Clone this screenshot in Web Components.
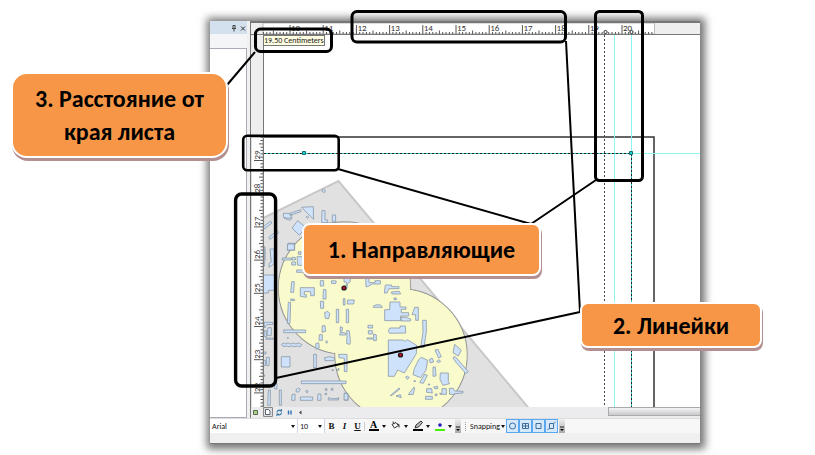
<!DOCTYPE html>
<html lang="ru">
<head>
<meta charset="utf-8">
<title>Линейки и направляющие</title>
<style>
  body { margin: 0; background: #fff; font-family: "Open Sans", "Liberation Sans", sans-serif;
    --ui: 8px/10px "Liberation Sans Narrow", Carlito, sans-serif; }
</style>
</head>
<body>
<guide-stage>
  <app-window></app-window>
  <annotation-lines slot="overlay"></annotation-lines>
  <call-out slot="overlay" style="--x:11px;--y:72px;--w:217px;--h:86px;--r:16px">3. Расстояние от края листа</call-out>
  <call-out slot="overlay" style="--x:302px;--y:223px;--w:239px;--h:53px;--r:8px">1. Направляющие</call-out>
  <call-out slot="overlay" style="--x:580px;--y:302px;--w:182px;--h:46px;--r:8px">2. Линейки</call-out>
</guide-stage>

<script>
const define = (name, html, setup) => customElements.define(name, class extends HTMLElement {
  connectedCallback() {
    if (this.shadowRoot) return;
    const root = this.attachShadow({ mode: 'open' });
    const t = document.createElement('template');
    t.innerHTML = html;
    root.append(t.content.cloneNode(true));
    if (setup) setup(this, root);
  }
});

define('guide-stage', `
<style>
  :host { display: grid; position: relative; height: 100vh; box-sizing: border-box; padding: 21px 115px 11px 210px; overflow: hidden; }
</style>
<slot></slot><slot name="overlay"></slot>`);

/* Orange label over the window */
define('call-out', `
<style>
  :host { position: absolute; left: var(--x); top: var(--y); width: var(--w); min-height: var(--h); box-sizing: border-box;
    display: grid; place-items: center; text-align: center; padding: 0 16px; background: #f79646;
    border: 2px solid #fff; border-radius: var(--r); box-shadow: 1px 3px 0 #b38f91;
    font: 700 24px/33px Carlito, Lato, "Open Sans", sans-serif; color: #000; }
</style>
<span><slot></slot></span>`);

/* Black frames and connectors */
define('annotation-lines', `
<style>
  :host { position: absolute; inset: 0; pointer-events: none; }
  svg { display: block; width: 100%; height: 100%; }
</style>
<svg fill="none" stroke="#000" stroke-width="3" stroke-linejoin="round" aria-hidden="true">
  <rect x="352" y="11.500" width="213.500" height="30.500" rx="5"/>
  <rect x="595.500" y="11.500" width="47" height="169" rx="4"/>
  <rect x="255.500" y="29" width="76" height="22.500" rx="5"/>
  <rect x="243.200" y="135.800" width="95.500" height="34.500" rx="4" stroke-width="2.600"/>
  <rect x="235.600" y="194" width="40" height="192" rx="6" stroke-width="3.400"/>
  <g stroke-width="2">
    <path d="M255 52L227 85"/>
    <path d="M566 41L580 312L276 378"/>
    <path d="M338 169L531 224L596 180"/>
  </g>
</svg>`);

define('app-window', `
<style>
  :host { display: grid; grid-template-rows: minmax(0,1fr) auto; min-width: 0; background: #f0f0f0;
    box-shadow: 1px 1px 8px 4px rgba(0,0,0,.55); }
  .work { display: grid; grid-template-columns: 37px minmax(0,1fr); column-gap: 3px; min-height: 0; }
  .doc { display: grid; grid-template: 14px minmax(0,1fr) 11px / 13px minmax(0,1fr); border-left: 1px solid #777; }
  h-ruler, view-bar { grid-column: 1 / 3; }
</style>
<div class="work">
  <side-panel></side-panel>
  <div class="doc">
    <h-ruler></h-ruler>
    <v-ruler></v-ruler>
    <map-canvas></map-canvas>
    <view-bar></view-bar>
  </div>
</div>
<format-bar></format-bar>`);

define('side-panel', `
<style>
  :host { display: grid; grid-template-rows: 13px 14px 1fr; background: #f4f5f7; }
  header { background: #d3e0ee; display: flex; justify-content: flex-end; align-items: center; }
  button { all: unset; display: block; width: 9px; height: 10px; }
  svg { display: block; width: 100%; height: 100%; }
  .body { background: #fff; border: 1px solid #a9abb5; border-left: 0; }
</style>
<header>
  <button aria-label="Закрепить"><svg viewBox="0 0 9 10" fill="none" stroke="#444"><path d="M3 5.500h4M4 2.500v3M6 2v3.500M4 2.500h2M5 5.500v3"/></svg></button>
  <button aria-label="Закрыть"><svg viewBox="0 0 9 10" fill="none" stroke="#333"><path d="M3 3.500l4 4M7 3.500l-4 4"/></svg></button>
</header>
<div></div>
<div class="body"></div>`);

/* Ruler scale: 1 cm = 33.2 px */
const CM = 33.2;
define('h-ruler', `
<style>
  :host { display: block; box-sizing: border-box; border-top: 2px solid #777; border-bottom: 1px solid #777; background: #eee; overflow: hidden; }
  svg { display: block; width: 100%; height: 11px; }
  text { font: 9px "Liberation Sans Narrow", Carlito, sans-serif; fill: #333; }
</style>
<svg><rect x="12" width="391.500" height="11" fill="#fff" stroke="#bbb"/><g></g>
<g fill="#fff" stroke="#333"><circle cx="354.500" cy="9" r="1.600"/><circle cx="380.500" cy="9" r="1.600"/></g></svg>`, (el, root) => {
  let s = '', ticks = '';
  for (let mm = 92; mm <= 210; mm++) {
    const x = (39 + (mm - 100) * CM / 10).toFixed(1);
    if (mm % 10 === 0) {
      if (mm < 210) { ticks += `M${x} 2V11`; s += `<text x="${+x + 1}" y="7.5">${mm / 10}</text>`; }
    } else ticks += `M${x} ${mm % 5 === 0 ? 7.5 : 9}V11`;
  }
  root.querySelector('g').innerHTML = `<path d="${ticks}" stroke="#555"/>` + s;
});

define('v-ruler', `
<style>
  :host { display: block; border-right: 1px solid #777; background: #eee; overflow: hidden; min-height: 0; }
  svg { display: block; width: 100%; height: 100%; }
  text { font: 9px "Liberation Sans Narrow", Carlito, sans-serif; fill: #333; }
</style>
<svg><rect y="102.500" width="12" height="1000" fill="#fff" stroke="#bbb"/><g></g></svg>`, (el, root) => {
  let s = '', ticks = '';
  for (let mm = 297; mm >= 216; mm--) {
    const y = (125.5 + (290 - mm) * CM / 10).toFixed(1);
    if (mm % 10 === 0) {
      ticks += `M3 ${y}H12`;
      s += `<text transform="translate(8.500 ${+y - 1}) rotate(-90)">${mm / 10}</text>`;
    } else ticks += `M${mm % 5 === 0 ? 8 : 9.5} ${y}H12`;
  }
  root.querySelector('g').innerHTML = `<path d="${ticks}" stroke="#555"/>` + s;
});

define('map-canvas', `
<style>
  :host { display: block; position: relative; background: #fff; overflow: hidden; min-height: 0; }
  svg { display: block; width: 100%; height: 100%; }
  .tip { position: absolute; left: 0; top: 0; box-sizing: border-box; height: 11px; background: #ffffe1;
    border: 1px solid #777; border-left: 0; font: var(--ui); line-height: 9px; color: #222; white-space: nowrap; }
</style>
<svg><g transform="translate(-264 -35)">
  <path d="M255 222L338.500 181L532 412H255z" fill="#e1e1e1" stroke="#c8c8c8" stroke-width="2"/>
  <g fill="#fafbcd" stroke="#999" stroke-width="1.400"><circle cx="344.500" cy="288" r="66"/><circle cx="401" cy="355" r="66"/></g>
  <g fill="#fafbcd"><circle cx="344.500" cy="288" r="65.700"/><circle cx="401" cy="355" r="65.700"/></g>
  <g fill="#cfe2fb" stroke="#8898a6" stroke-width="2.400">
    <g transform="translate(200 100) scale(.3333)">
      <path d="M305 322L340 320L341 358L322 340z M366 270l5-3 5 4-2 6-7-1z M250 340h18l8 5-5 10-20-2z M252 355l20 6 5-10M270 340l32-11 1 6-33 11z M318 351l4-3 4 4-3 4z"/>
      <path d="M190 380l22-17 4 6-23 18z M206 412l26-20 4 6-26 20z M276 384l17-22 24 20-19 24z"/>
      <path d="M366 332h9v28h8v8h-18z M397 345h10v19h-10z M378 369h75M264 430h20v21h-22z"/>
      <path d="M188 442h7v38h-7z M212 450h12v30h-10z"/>
    </g>
    <g transform="translate(200 240) scale(.3333)">
      <path d="M188 20h6v58h-6z M210 27h12v45l-15 10v-12l7-4z M188 105h35v46h-18v8h-17z"/>
      <path d="M263 12h20v18h-21z M247 54h27v6h-27z M276 52h10v8h-10z M275 66h12v9h-12z M291 50h30v26h-28z M295 35h8v8h-8z M290 90h26v7h-26z"/>
      <path d="M275 125h8l-2 32h-9z M272 177l12 1-1 4-11-1z M301 143h42v24h-11v-12h-19v9h6v8l-18-3z"/>
      <path d="M265 187h7l-2 63h-8z M361 122h10v16h-10z M395 122l14 1-2 8-13-1z M370 149h8v28h-9z M361 184h10v21h-9z M374 218l9-4 6 6-3 16-10-1z"/>
      <path d="M409 208h7v40h-7z M439 208h7v40h-7z M443 180h20l-2 12h-19z M430 176h5v19h-5z M432 112l20-3-2 17-7 5-3 16-8 1v-10h7v-12h-7z"/>
      <path d="M367 257h8l2 17-11 3z M358 284h9v17h-10z M347 311l9-3 2 15-10 5z M421 260l7 3-3 15 12 1v6h-18l2-6z M440 271l8 2 3 26-1 14-10-2 1-22z M377 306l3-4 3 4-3 4z"/>
      <path d="M192 247h27v6l-19 1-6 10zM204 263h10v23h-13z M193 272h6v20l-7-4z M198 294h22v4h-22z M251 270h66v8h-66z M262 293h3v2h-3z"/>
      <path d="M244 314l5-5 7 3 8-3 7 3 9-3 7 3 9-3 10 5-5 6-8-2-8 2-8-2-9 2-8-2-8 2z"/>
      <path d="M189 336h9v6h-9z M188 361h8v16h-8z M199 352h9l-1 25h-7z M190 405h4v4h-4z M244 350h26v31h-26z M341 343h8v40h-8z M374 353l15-3 15 4-2 8h-27z M416 343h25v52h-8v-40l-16-2z"/>
      <path d="M396 389h4v3h-4z M412 388l5-3v6h-6z M304 423h134v8h-134z M224 430h7v17h-7z M205 450h6v46h-8z M238 450h6v46h-6z M276 464l9-2v19h-10z M288 449l7-5 6 4-5 8h-7z M317 453l4-2 4 3-4 5z M301 471h37v10h-37z M354 462h9v19h-10z M376 446h5v5h-5z M394 445h5v6h-5z M385 473l10 3h20v-4l1 8h-31z M375 460h5v4h-5z M433 460h11v21h-11z"/>
    </g>
    <g transform="translate(340 260) scale(.3333)">
      <path d="M77 40h10v28h18v-6h16v10h-24l-14 8h-5z M136 75h19v5h22v6h-30l-6 13h-8z M154 96l24-2 4 8h-26z M100 138l10-4 12 1 5 7h-27z M162 114h7v5h-7z"/>
      <path d="M150 126h30v15h18v7h-14v10h22v10h-24v14h-48v-33h15z M224 142h11v39h-8v-17h-11l4-10z M183 172h16l14 6-2 5h-28z"/>
      <path d="M84 196h14v8h-14z M85 212h12v10h-12z M81 234h20v-12l8 3v17h-8v-5h-20z M145 212l5-8h30v-6h16l1 21-48 1z M248 181h11v35l-7 47-10-1 7-45z"/>
      <path d="M145 240h44l5 4 8-5 28 17-1 25-36 58-20-9-10 19h-18z"/>
      <path d="M236 299l8-7 19 9-5 30-16 22-23-9 4-18z M268 298l9-3 4 11-10 3z M285 270l9-2 10 22-8 4z M290 304l7-5 5 5-8 4z M279 321h7l2 27-9 1z M344 253l20 18-9 17-16-10z M339 293l7-3 39 45-7 6-31-35z"/>
      <path d="M301 339h24v26l4 6-20 5-9-18z M197 351l6-3 5 5-6 5z M222 362h4v3h-4z M239 368l15-25 8 3-12 24z M151 407l26-23 3 3-26 20z M168 408l13-4 3 9z M205 404l17-23 2 4-4 18z M265 372h4v3h-4z"/>
      <path d="M260 386h15l2 13-17-2z M257 409h20v9h-21z M281 381l12-2v7h-9z M286 402h5v5h-5z M299 400h7v-14h13v17h-19z M328 385h12l4 8 25 1v5l-25 2-3 2h-12z M13 399l11 4-1 17-11-1z"/>
    </g>
  </g>
  <g fill="#c4122f" stroke="#111" stroke-width="1.200"><circle cx="344" cy="288" r="2"/><circle cx="400.500" cy="355" r="2"/></g>
  <g fill="none">
    <path d="M262 137H654V412" stroke="#333" stroke-width="1.500"/>
    <path d="M614.500 35V412M631.500 35V153M631 153.500H1200" stroke="#8df3f3"/>
    <path d="M262 153.500H631.500V412" stroke="#222"/>
    <path d="M262 153.500H631.500V412" stroke="#35c0c0" stroke-dasharray="2 2"/>
    <path d="M604.500 35V412" stroke="#444" stroke-dasharray="2 2"/>
    <path d="M302.500 151.500h3v3h-3zM629.500 151.500h3v3h-3z" fill="#1fd3cf" stroke="#126e70"/>
  </g>
</g></svg>
<div class="tip">19.50 Centimeters</div>`);

define('view-bar', `
<style>
  :host { display: flex; justify-content: space-between; background: #ececee; }
  nav { display: flex; align-items: center; }
  button { all: unset; display: block; width: 12px; height: 11px; }
  svg { display: block; width: 100%; height: 100%; }
  .thumb { width: 92px; height: 9px; box-sizing: border-box; border: 1px solid #aaa; border-right: 0; background: linear-gradient(#f4f4f4,#c9c9cd); }
</style>
<nav>
  <button aria-label="Вид данных"><svg viewBox="0 0 12 11"><path d="M2.500 3.500h4v4h-4z" fill="#acd28a" stroke="#576a4d"/></svg></button>
  <button aria-label="Вид компоновки"><svg viewBox="0 0 12 11"><path d="M.5.5h9v9h-9z" fill="#ddd" stroke="#888"/><path d="M2.500 2.500h3l1.500 1.500v3.500h-4.500z" fill="#fff" stroke="#567"/></svg></button>
  <button aria-label="Обновить"><svg viewBox="0 0 12 11" fill="none" stroke="#3c7fa8" stroke-width="1.200"><path d="M2 5.500a2.300 2.300 0 0 1 4-1.500M6.500 5.500a2.300 2.300 0 0 1-4 1.500M6.500 2v2h-2M2 9V7h2"/></svg></button>
  <button aria-label="Пауза"><svg viewBox="0 0 12 11" stroke="#2b6fb5" stroke-width="1.400"><path d="M1.500 3.500v4M4 3.500v4"/></svg></button>
  <button aria-label="Прокрутить влево"><svg viewBox="0 0 12 11"><path d="M0 5.500l2.500-2v4z" fill="#444"/></svg></button>
</nav>
<div class="thumb"></div>`);

/* Colour button with a drop arrow; the icon comes through the slot */
define('tool-button', `
<style>
  :host { display: block; flex: none; }
  button { all: unset; display: flex; align-items: center; width: 22px; height: 14px; }
  span { width: 16px; height: 14px; }
  i { border: 2px solid transparent; border-top: 3px solid #111; border-bottom: 0; }
</style>
<button><span><slot></slot></span><i></i></button>`, (el, root) =>
  root.querySelector('button').setAttribute('aria-label', el.getAttribute('label')));

define('format-bar', `
<style>
  :host { display: block; background: #f0f0f0; border-top: 1px solid #ddd; border-bottom: 1px solid #777; box-sizing: border-box; height: 26px; }
  .row { display: flex; align-items: center; height: 14px; background: #f7f7f8; overflow: hidden; }
  select { appearance: none; box-sizing: border-box; height: 14px; margin: 0; border: 0; border-right: 1px solid #ccd6e4; border-radius: 0; flex: none;
    padding: 0 8px 0 2px; font: var(--ui); color: #111; background: #fff; }
  .pick { position: relative; flex: none; display: flex; }
  .pick::after { content: ""; position: absolute; right: 3px; top: 6px; border: 2px solid transparent; border-top: 3px solid #111; border-bottom: 0; }
  .font { width: 88px; } .size { width: 27px; }
  button { all: unset; flex: none; width: 13px; height: 14px; text-align: center; font: 700 9px/14px "Liberation Serif", serif; color: #111; }
  .i { font-style: italic; } .u { text-decoration: underline; }
  .sep { width: 1px; height: 9px; background: #ccc; margin-right: 1px; }
  svg { display: block; }
  .grip { width: 6px; height: 14px; margin: 0 1px; background: linear-gradient(#eee,#aaa); }
  .dots { height: 9px; border-left: 1px dotted #999; margin: 0 4px 0 3px; }
  .snap { display: flex; align-items: center; gap: 1px; width: 36px; font: var(--ui); }
  .snap i { border: 2px solid transparent; border-top: 3px solid #111; border-bottom: 0; }
  .t { box-sizing: border-box; border: 1px solid #5aa9ee; background: #d5e9fb; }
</style>
<div class="row">
  <label class="pick"><select class="font" aria-label="Шрифт"><option>Arial</option></select></label>
  <label class="pick"><select class="size" aria-label="Размер"><option>10</option></select></label>
  <button>B</button><button class="i">I</button><button class="u">U</button><div class="sep"></div>
  <tool-button label="Цвет текста"><svg width="16" height="14"><text x="4" y="9" font-family="Liberation Serif" font-weight="700" font-size="10">A</text><path d="M3 10h10v2H3z"/></svg></tool-button>
  <tool-button label="Заливка"><svg width="16" height="14" fill="none" stroke="#333"><path d="M4 5.500l4-2 2.500 3-4 2.500zM5.500 5L5 2.500M9 5l2 .5v3"/></svg></tool-button>
  <tool-button label="Цвет линии"><svg width="16" height="14"><path d="M5 9l1-3 5-4 1.500 1.500-4 4.500z" fill="#bbb" stroke="#333"/><path d="M3 10h10v2H3z"/></svg></tool-button>
  <tool-button label="Цвет маркера"><svg width="16" height="14"><circle cx="8" cy="6" r="1.800" fill="#1b1bb5"/><path d="M3 10h10v2H3z" fill="#4af00a"/></svg></tool-button>
  <button class="grip" aria-label="Ещё"><svg width="6" height="14"><path d="M1 8h4" stroke="#222"/><path d="M1 10h4l-2 2z"/></svg></button>
  <div class="dots"></div>
  <button class="snap">Snapping<i></i></button>
  <button class="t" aria-label="Точка"><svg width="11" height="12" fill="none" stroke="#3d6e9c"><circle cx="5.500" cy="6" r="3"/></svg></button>
  <button class="t" aria-label="Конец"><svg width="11" height="12" fill="none" stroke="#3d6e9c"><path d="M2.500 3.500h6v5h-6zM5.500 3.500v5M2.500 6h6"/></svg></button>
  <button class="t" aria-label="Вершина"><svg width="11" height="12" fill="none" stroke="#3d6e9c"><path d="M3 3.500h5v5H3z"/></svg></button>
  <button class="t" aria-label="Ребро"><svg width="11" height="12" fill="none" stroke="#3d6e9c"><path d="M3.500 3.500h4v5h-4zM1.500 9.500l2-1M7.500 3.500l2-1.500"/></svg></button>
  <button class="grip" aria-label="Ещё"><svg width="6" height="14"><path d="M1 8h4" stroke="#222"/><path d="M1 10h4l-2 2z"/></svg></button>
</div>`);
</script>
</body>
</html>
